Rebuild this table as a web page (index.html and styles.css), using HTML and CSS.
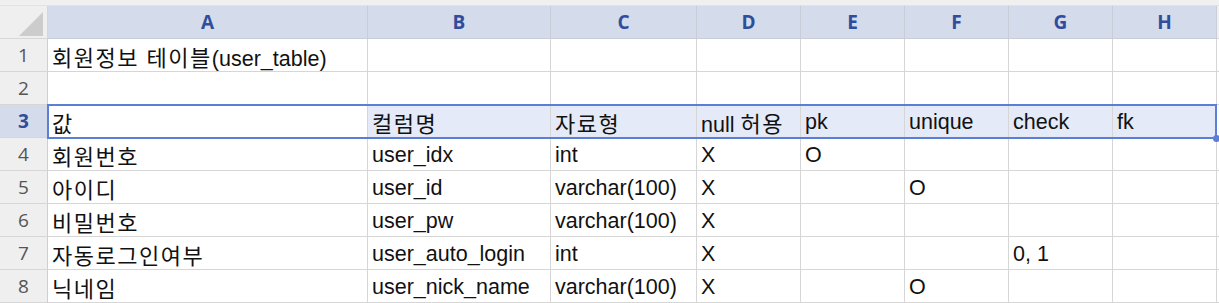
FILE: index.html
```html
<!DOCTYPE html>
<html lang="ko">
<head>
<meta charset="utf-8">
<link rel="stylesheet" href="styles.css">
</head>
<body>
<div class="topbar"></div>
<div class="sheet">
  <div class="grid">
    <div class="corner"><svg width="47" height="32" viewBox="0 0 47 32"><polygon points="19,30 43,30 43,6" fill="#cccccc"/></svg></div>
    <div class="ch">A</div><div class="ch">B</div><div class="ch">C</div><div class="ch">D</div><div class="ch">E</div><div class="ch">F</div><div class="ch">G</div><div class="ch">H</div><div class="fill-h"></div>

    <div class="rh">1</div><div class="c"><span class="ko">회원정보 테이블</span>(user_table)</div><div class="c"></div><div class="c"></div><div class="c"></div><div class="c"></div><div class="c"></div><div class="c"></div><div class="c"></div><div class="fill"></div>

    <div class="rh">2</div><div class="c"></div><div class="c"></div><div class="c"></div><div class="c"></div><div class="c"></div><div class="c"></div><div class="c"></div><div class="c"></div><div class="fill"></div>

    <div class="rh sel">3</div><div class="c"><span class="ko">값</span></div><div class="c s"><span class="ko">컬럼명</span></div><div class="c s"><span class="ko">자료형</span></div><div class="c s">null <span class="ko">허용</span></div><div class="c s">pk</div><div class="c s">unique</div><div class="c s">check</div><div class="c s">fk</div><div class="fill"></div>

    <div class="rh">4</div><div class="c"><span class="ko">회원번호</span></div><div class="c">user_idx</div><div class="c">int</div><div class="c">X</div><div class="c">O</div><div class="c"></div><div class="c"></div><div class="c"></div><div class="fill"></div>

    <div class="rh">5</div><div class="c"><span class="ko">아이디</span></div><div class="c">user_id</div><div class="c">varchar(100)</div><div class="c">X</div><div class="c"></div><div class="c">O</div><div class="c"></div><div class="c"></div><div class="fill"></div>

    <div class="rh">6</div><div class="c"><span class="ko">비밀번호</span></div><div class="c">user_pw</div><div class="c">varchar(100)</div><div class="c">X</div><div class="c"></div><div class="c"></div><div class="c"></div><div class="c"></div><div class="fill"></div>

    <div class="rh">7</div><div class="c"><span class="ko">자동로그인여부</span></div><div class="c">user_auto_login</div><div class="c">int</div><div class="c">X</div><div class="c"></div><div class="c"></div><div class="c">0, 1</div><div class="c"></div><div class="fill"></div>

    <div class="rh">8</div><div class="c"><span class="ko">닉네임</span></div><div class="c">user_nick_name</div><div class="c">varchar(100)</div><div class="c">X</div><div class="c"></div><div class="c">O</div><div class="c"></div><div class="c"></div><div class="fill"></div>
  </div>
  <div class="selection"><span class="handle"></span></div>
</div>
</body>
</html>
```

FILE: styles.css
```css
html, body {
  margin: 0;
  padding: 0;
  background: #ffffff;
}
body {
  width: 1219px;
  height: 303px;
  overflow: hidden;
  font-family: "Liberation Sans", "Noto Sans CJK KR", sans-serif;
}
.topbar {
  height: 5px;
  background: #f0f0f0;
  border-bottom: 1px solid #e2e2e2;
}
.sheet {
  position: relative;
}
.grid {
  display: grid;
  grid-template-columns: 48px 320px 183px 146px 104px 104px 104px 104px 104px 1fr;
  grid-auto-rows: 33px;
}
.grid > div {
  box-sizing: border-box;
  border-right: 1px solid #d6d6d6;
  border-bottom: 1px solid #d6d6d6;
  white-space: nowrap;
  overflow: hidden;
}
.corner {
  background: #efefef;
  line-height: 0;
}
.ch {
  background: #d4dbeb;
  color: #2f4d9c;
  font-family: "Open Sans", sans-serif;
  font-weight: 700;
  font-size: 19px;
  text-align: center;
  line-height: 32px;
  border-right-color: #c8cdd8 !important;
  border-bottom-color: #c8cdd8 !important;
}
.fill-h {
  background: #f0f0f0;
  border-right: none !important;
}
.rh {
  background: #efefef;
  color: #555555;
  font-family: "Open Sans", sans-serif;
  font-size: 19px;
  text-align: center;
  line-height: 33px;
  border-right-color: #cfcfcf !important;
}
.rh.sel {
  background: #d4dbeb;
  color: #2f4d9c;
  font-weight: 700;
}
.c {
  font-size: 21.5px;
  color: #111111;
  padding-left: 4px;
  line-height: 35px;
}
.ko {
  font-family: "Noto Sans CJK KR", sans-serif;
  font-size: 22px;
  letter-spacing: 1.5px;
}
.c.s {
  background: #e4eaf7;
}
.fill {
  border-right: none !important;
}
.selection {
  position: absolute;
  left: 47px;
  top: 98px;
  width: 1170px;
  height: 35px;
  box-sizing: border-box;
  border: 2px solid #5b7fd6;
  pointer-events: none;
}
.handle {
  position: absolute;
  right: -5px;
  bottom: -5px;
  width: 7px;
  height: 7px;
  border-radius: 50%;
  background: #5b7fd6;
}
```
